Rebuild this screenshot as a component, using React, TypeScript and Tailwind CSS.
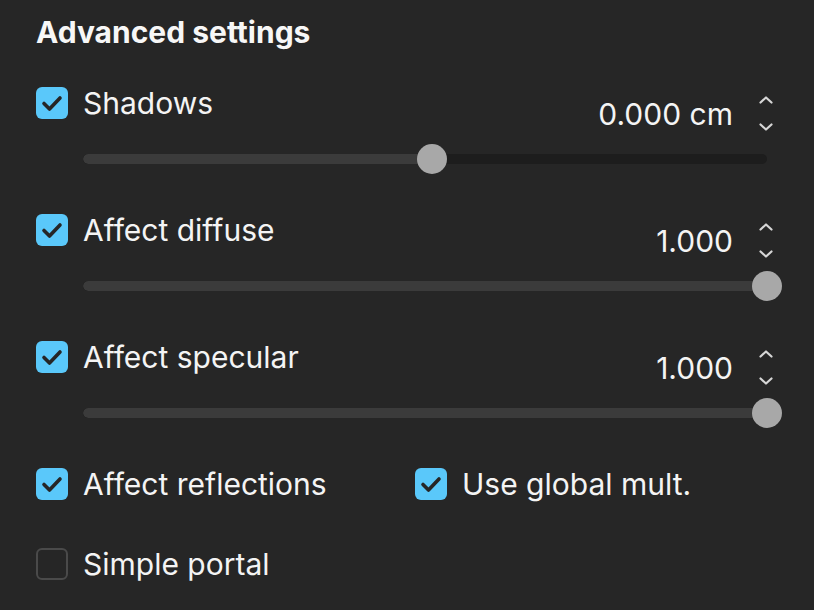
import { useState } from 'react';

interface CheckProps {
  checked: boolean;
  label: string;
}

function Check({ checked, label }: CheckProps) {
  return (
    <div className="flex items-center gap-[15px]">
      {checked ? (
        <div className="w-8 h-8 rounded-[6px] bg-[#5ac8fa] flex items-center justify-center">
          <svg width="32" height="32" viewBox="0 0 32 32" fill="none">
            <path d="M8 16.5 L13.5 22 L24 11" stroke="#262626" strokeWidth="3.6" strokeLinecap="round" strokeLinejoin="round" />
          </svg>
        </div>
      ) : (
        <div className="w-8 h-8 rounded-[6px] border-2 border-[#4a4a4a]" />
      )}
      <span className="text-[30px] leading-8 text-[#f4f4f4]">{label}</span>
    </div>
  );
}

function Spinner() {
  return (
    <div className="w-[14px] h-[37px] ml-[26px] flex flex-col justify-between items-center">
      <svg width="14" height="9" viewBox="0 0 14 9" fill="none">
        <path d="M1.5 7.5 L7 2.5 L12.5 7.5" stroke="#d6d6d6" strokeWidth="2.2" strokeLinecap="round" strokeLinejoin="round" />
      </svg>
      <svg width="14" height="9" viewBox="0 0 14 9" fill="none">
        <path d="M1.5 1.5 L7 6.5 L12.5 1.5" stroke="#d6d6d6" strokeWidth="2.2" strokeLinecap="round" strokeLinejoin="round" />
      </svg>
    </div>
  );
}

function Slider({ value }: { value: number }) {
  const pct = `${value * 100}%`;
  return (
    <div className="relative h-[30px] mt-3 ml-[47px] mr-[15px]">
      <div className="absolute left-0 right-0 top-[10px] h-[10px] rounded-full bg-[#1d1d1d] overflow-hidden">
        <div className="h-full bg-[#3b3b3b] rounded-full" style={{ width: pct }} />
      </div>
      <div
        className="absolute top-0 w-[30px] h-[30px] rounded-full bg-[#a8a8a8]"
        style={{ left: `calc(${pct} - 15px)` }}
      />
    </div>
  );
}

interface GroupProps {
  label: string;
  value: string;
  pos: number;
}

function SliderGroup({ label, value, pos }: GroupProps) {
  const [checked] = useState(true);
  return (
    <div>
      <div className="flex justify-between items-start">
        <Check checked={checked} label={label} />
        <div className="flex items-center h-[37px] mt-2 mr-[9px]">
          <span className="text-[30px] leading-8 text-[#f4f4f4]">{value}</span>
          <Spinner />
        </div>
      </div>
      <Slider value={pos} />
    </div>
  );
}

export default function App() {
  return (
    <div
      className="w-[814px] h-[610px] bg-[#262626] pl-9 pr-8 pt-[14px] overflow-hidden"
      style={{ fontFamily: 'Inter, "Noto Sans", sans-serif' }}
    >
      <h2 className="text-[30px] leading-9 font-bold text-[#f7f7f7]">Advanced settings</h2>

      <div className="flex flex-col gap-10 mt-[37px]">
        <SliderGroup label="Shadows" value="0.000 cm" pos={0.51} />
        <SliderGroup label="Affect diffuse" value="1.000" pos={1} />
        <SliderGroup label="Affect specular" value="1.000" pos={1} />
      </div>

      <div className="flex mt-10">
        <div className="w-[379px]">
          <Check checked label="Affect reflections" />
        </div>
        <Check checked label="Use global mult." />
      </div>

      <div className="mt-12">
        <Check checked={false} label="Simple portal" />
      </div>
    </div>
  );
}
